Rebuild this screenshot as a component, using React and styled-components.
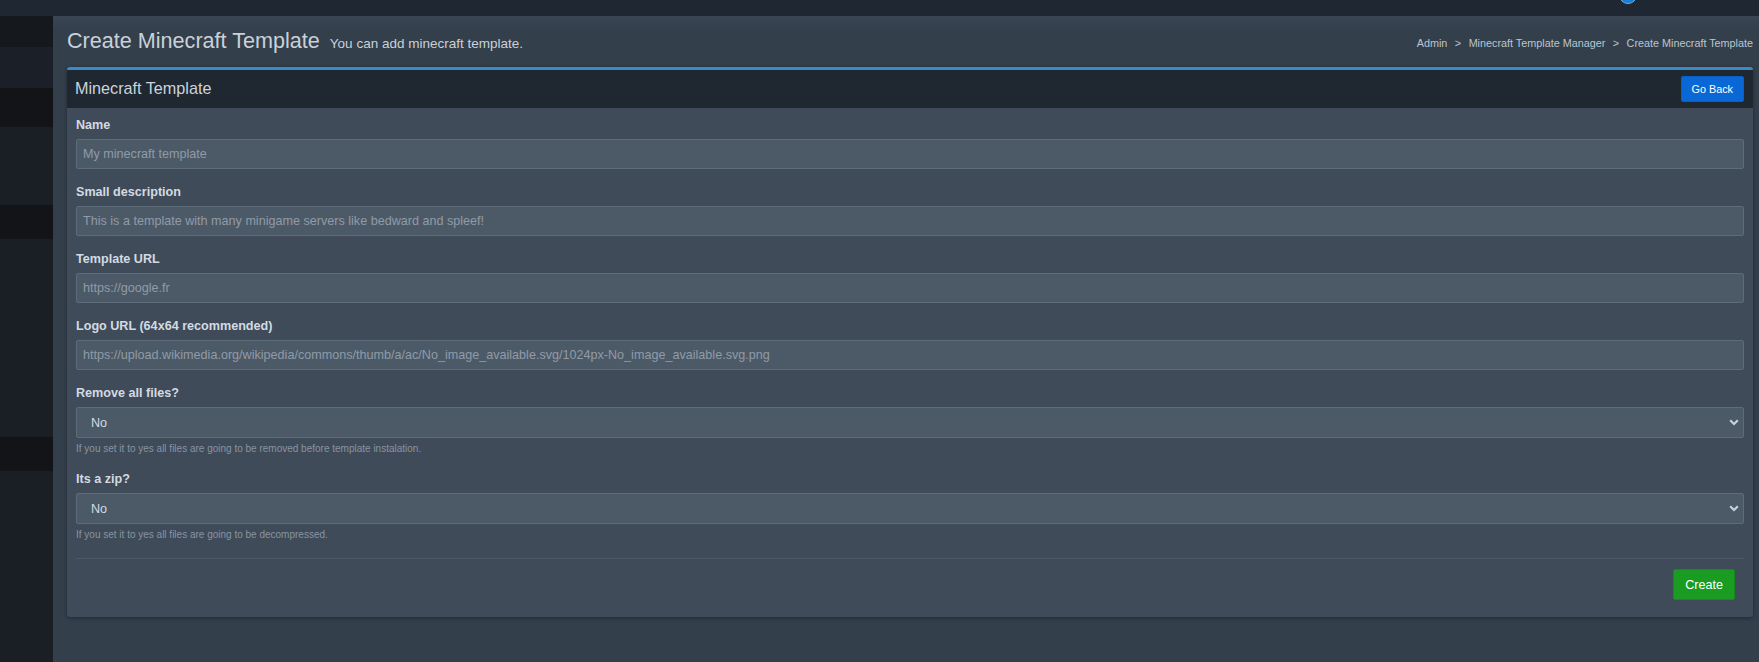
import styled, { createGlobalStyle } from "styled-components"

const GlobalStyle = createGlobalStyle`
    html, body {
        margin: 0;
        height: 100%;
        overflow: hidden;
        background-color: #343f4c;
        font-family: "Liberation Sans", Arial, sans-serif;
    }

    * {
        box-sizing: border-box;
    }
`

const sideBlocks = [
    { height: 31, shade: "#15191e" },
    { height: 41, shade: "#1b2028" },
    { height: 39, shade: "#121418" },
    { height: 78, shade: "#1a1f26" },
    { height: 34, shade: "#121418" },
    { height: 198, shade: "#1a1f26" },
    { height: 34, shade: "#121418" },
    { height: 300, shade: "#1a1f26" },
]

const fields = [
    { label: "Name", placeholder: "My minecraft template" },
    { label: "Small description", placeholder: "This is a template with many minigame servers like bedward and spleef!" },
    { label: "Template URL", placeholder: "https://google.fr" },
    { label: "Logo URL (64x64 recommended)", placeholder: "https://upload.wikimedia.org/wikipedia/commons/thumb/a/ac/No_image_available.svg/1024px-No_image_available.svg.png" },
]

const selects = [
    { label: "Remove all files?", help: "If you set it to yes all files are going to be removed before template instalation." },
    { label: "Its a zip?", help: "If you set it to yes all files are going to be decompressed." },
]

function Chevron(){
    return(
        <ChevronIcon viewBox="0 0 10 7" width="10" height="7">
            <path d="M1.2 1.3 L5 5 L8.8 1.3" fill="none" stroke="#c9d0d7" strokeWidth="2.2" />
        </ChevronIcon>
    )
}

export default function App(){

    return(
        <>
            <GlobalStyle />
            <Page>
                <TopBar>
                    <Avatar />
                </TopBar>
                <Layout>
                    <Sidebar>
                        {sideBlocks.map((b, i) => (
                            <SideBlock key={i} $height={b.height} $shade={b.shade} />
                        ))}
                    </Sidebar>
                    <Main>
                        <ContentHeader>
                            <h1>
                                Create Minecraft Template
                                <small>You can add minecraft template.</small>
                            </h1>
                            <Breadcrumb>
                                <li>Admin</li>
                                <li>Minecraft Template Manager</li>
                                <li>Create Minecraft Template</li>
                            </Breadcrumb>
                        </ContentHeader>

                        <Card>
                            <CardHeader>
                                <h3>Minecraft Template</h3>
                                <Button $color="#0a67d6" $border="#0b5ec2" $small>Go Back</Button>
                            </CardHeader>
                            <CardBody>
                                {fields.map((f) => (
                                    <FormGroup key={f.label}>
                                        <Label>{f.label}</Label>
                                        <Input type="text" placeholder={f.placeholder} />
                                    </FormGroup>
                                ))}
                                {selects.map((s) => (
                                    <FormGroup key={s.label}>
                                        <Label>{s.label}</Label>
                                        <SelectWrap>
                                            <Select defaultValue="no">
                                                <option value="no">No</option>
                                                <option value="yes">Yes</option>
                                            </Select>
                                            <Chevron />
                                        </SelectWrap>
                                        <HelpText>{s.help}</HelpText>
                                    </FormGroup>
                                ))}
                                <Footer>
                                    <Button $color="#1a9b22" $border="#178a1e">Create</Button>
                                </Footer>
                            </CardBody>
                        </Card>
                    </Main>
                </Layout>
            </Page>
        </>
    )
}


const Page = styled.div`
    display: flex;
    flex-direction: column;
    height: 662px;
    width: 1759px;
`

const TopBar = styled.header`
    position: relative;
    height: 16px;
    flex-shrink: 0;
    background-color: #1f2832;
    overflow: hidden;
`

const Avatar = styled.div`
    position: absolute;
    left: 1619px;
    top: -14px;
    width: 18px;
    height: 18px;
    border-radius: 50%;
    background: radial-gradient(circle at 50% 40%, #4aa3ea 0%, #1c7fd6 60%, #1565b5 100%);
    border: 1px solid #6cb4ee;
`

const Layout = styled.div`
    display: flex;
    flex: 1;
    min-height: 0;
`

const Sidebar = styled.aside`
    width: 53px;
    flex-shrink: 0;
    display: flex;
    flex-direction: column;
    overflow: hidden;
    background-color: #1a1f26;
`

const SideBlock = styled.div`
    height: ${(p) => p.$height}px;
    flex-shrink: 0;
    background-color: ${(p) => p.$shade};
`

const Main = styled.main`
    flex: 1;
    padding: 0 6px 0 14px;
    background: linear-gradient(#3a4654 0px, #343f4c 14px);
`

const ContentHeader = styled.div`
    display: flex;
    justify-content: space-between;
    align-items: center;
    padding-top: 12px;
    margin-bottom: 10px;

    h1 {
        margin: 0;
        font-size: 21.6px;
        line-height: 26px;
        font-weight: 400;
        color: #c9d1d9;
    }

    small {
        font-size: 13.5px;
        margin-left: 10px;
        color: #c9d1d9;
    }
`

const Breadcrumb = styled.ol`
    display: flex;
    list-style: none;
    margin: 1px 0 0;
    padding: 0;
    font-size: 10.8px;
    color: #bcc5ce;

    li + li::before {
        content: ">";
        padding: 0 7.5px;
        color: #bcc5ce;
    }
`

const Card = styled.section`
    border-top: 3px solid #3a8bc3;
    border-radius: 3px;
    background-color: #3f4b59;
    box-shadow: 0 1px 4px rgba(0, 0, 0, 0.35);
    overflow: hidden;
`

const CardHeader = styled.div`
    height: 38px;
    display: flex;
    align-items: center;
    justify-content: space-between;
    padding: 0 9px 1px 8px;
    background-color: #1f2731;

    h3 {
        margin: 0;
        font-size: 16.2px;
        font-weight: 400;
        color: #cbd3db;
    }
`

const Button = styled.button`
    height: ${(p) => (p.$small ? 26 : 31)}px;
    padding: 0 ${(p) => (p.$small ? 10 : 11)}px;
    font-family: "Liberation Sans", Arial, sans-serif;
    font-size: ${(p) => (p.$small ? 10.8 : 12.6)}px;
    color: #ffffff;
    background-color: ${(p) => p.$color};
    border: 1px solid ${(p) => p.$border};
    border-radius: 2px;
    cursor: pointer;
`

const CardBody = styled.div`
    padding: 8px 9px 8px;
`

const FormGroup = styled.div`
    margin-bottom: 14px;
`

const Label = styled.label`
    display: block;
    font-size: 12.6px;
    line-height: 19px;
    font-weight: 700;
    color: #d3dae1;
    margin-bottom: 4px;
`

const Input = styled.input`
    display: block;
    width: 100%;
    height: 30px;
    padding: 0 6px;
    font-family: "Liberation Sans", Arial, sans-serif;
    font-size: 12.6px;
    color: #d0d7de;
    background-color: #4c5a68;
    border: 1px solid #5e6b78;
    border-radius: 2px;
    outline: none;

    &::placeholder {
        color: #909ba6;
    }
`

const SelectWrap = styled.div`
    position: relative;
`

const Select = styled.select`
    display: block;
    width: 100%;
    height: 31px;
    padding: 0 14px;
    appearance: none;
    font-family: "Liberation Sans", Arial, sans-serif;
    font-size: 12.6px;
    color: #d3dae1;
    background-color: #4c5a68;
    border: 1px solid #5e6b78;
    border-radius: 2px;
    outline: none;
`

const ChevronIcon = styled.svg`
    position: absolute;
    right: 5px;
    top: 12px;
    pointer-events: none;
`

const HelpText = styled.small`
    display: block;
    margin-top: 3px;
    font-size: 10px;
    line-height: 15px;
    color: #8794a1;
`

const Footer = styled.div`
    display: flex;
    justify-content: flex-end;
    border-top: 1px solid #4d5866;
    padding: 10px 9px 9px 0;
    margin-top: 16px;
`
